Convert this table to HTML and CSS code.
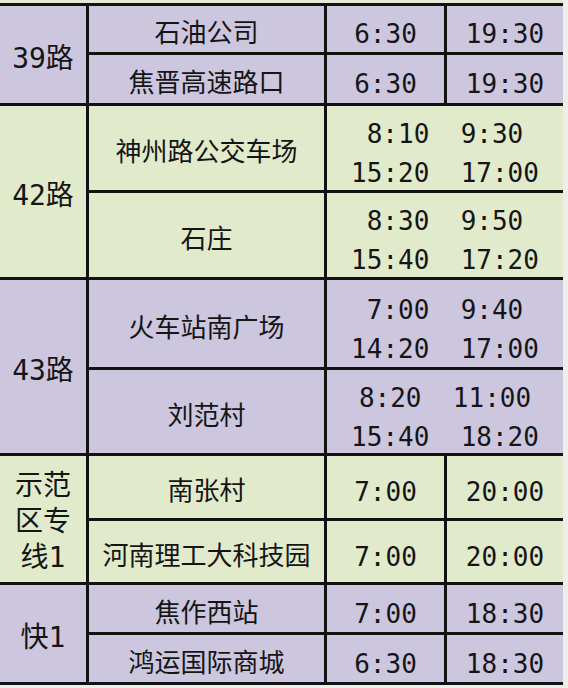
FILE: index.html
```html
<!DOCTYPE html>
<html lang="zh-CN">
<head>
<meta charset="utf-8">
<title>公交时刻表</title>
<link rel="stylesheet" href="styles.css">
</head>
<body>
<div class="top-strip"></div>
<div class="timetable">
  <div class="cell route purple span-rows">39路</div>
  <div class="cell stop purple">石油公司</div>
  <div class="cell time purple">6:30</div>
  <div class="cell time purple">19:30</div>
  <div class="cell stop purple">焦晋高速路口</div>
  <div class="cell time purple">6:30</div>
  <div class="cell time purple">19:30</div>

  <div class="cell route green span-rows">42路</div>
  <div class="cell stop green">神州路公交车场</div>
  <div class="cell times green span-cols"><span>8:10  9:30</span><span>15:20  17:00</span></div>
  <div class="cell stop green">石庄</div>
  <div class="cell times green span-cols"><span>8:30  9:50</span><span>15:40  17:20</span></div>

  <div class="cell route purple span-rows">43路</div>
  <div class="cell stop purple">火车站南广场</div>
  <div class="cell times purple span-cols"><span>7:00  9:40</span><span>14:20  17:00</span></div>
  <div class="cell stop purple">刘范村</div>
  <div class="cell times purple span-cols"><span>8:20  11:00</span><span>15:40  18:20</span></div>

  <div class="cell route route-multi green span-rows">示范<br>区专<br>线1</div>
  <div class="cell stop green">南张村</div>
  <div class="cell time green">7:00</div>
  <div class="cell time green">20:00</div>
  <div class="cell stop green">河南理工大科技园</div>
  <div class="cell time green">7:00</div>
  <div class="cell time green">20:00</div>

  <div class="cell route purple span-rows">快1</div>
  <div class="cell stop purple">焦作西站</div>
  <div class="cell time purple">7:00</div>
  <div class="cell time purple">18:30</div>
  <div class="cell stop purple">鸿运国际商城</div>
  <div class="cell time purple">6:30</div>
  <div class="cell time purple">18:30</div>
</div>
</body>
</html>
```

FILE: styles.css
```css
html, body {
  margin: 0;
  padding: 0;
}

body {
  width: 568px;
  height: 688px;
  overflow: hidden;
  background: #eeeeea;
  font-family: "Noto Sans CJK SC", "DejaVu Sans", sans-serif;
  color: #151515;
}

.top-strip {
  width: 563px;
  height: 3px;
  background: #e4ead6;
}

.timetable {
  width: 563px;
  background: #121212;
  padding: 3px 0;
  display: grid;
  grid-template-columns: 86px 235px 117px 116px;
  grid-template-rows: 46px 48px 84px 84px 87px 83px 62px 61px 47px 47px;
  gap: 3px;
}

.cell {
  display: flex;
  align-items: center;
  justify-content: center;
  text-align: center;
  overflow: hidden;
}

.purple {
  background: #ccc6df;
}

.green {
  background: #e1eacb;
}

.span-rows {
  grid-row: span 2;
}

.span-cols {
  grid-column: span 2;
}

.route {
  font-family: "DejaVu Sans Mono", "Noto Sans CJK SC", monospace;
  font-size: 28px;
  line-height: 36px;
  padding-top: 8px;
}

.route-multi {
  padding-top: 5px;
}

.stop {
  font-size: 26px;
  line-height: 30px;
  padding-top: 4px;
}

.time {
  font-family: "DejaVu Sans Mono", monospace;
  font-size: 26px;
  padding-top: 10px;
}

.times {
  flex-direction: column;
  font-family: "DejaVu Sans Mono", monospace;
  font-size: 26px;
  line-height: 39px;
  white-space: pre;
  padding-top: 12px;
}
```
